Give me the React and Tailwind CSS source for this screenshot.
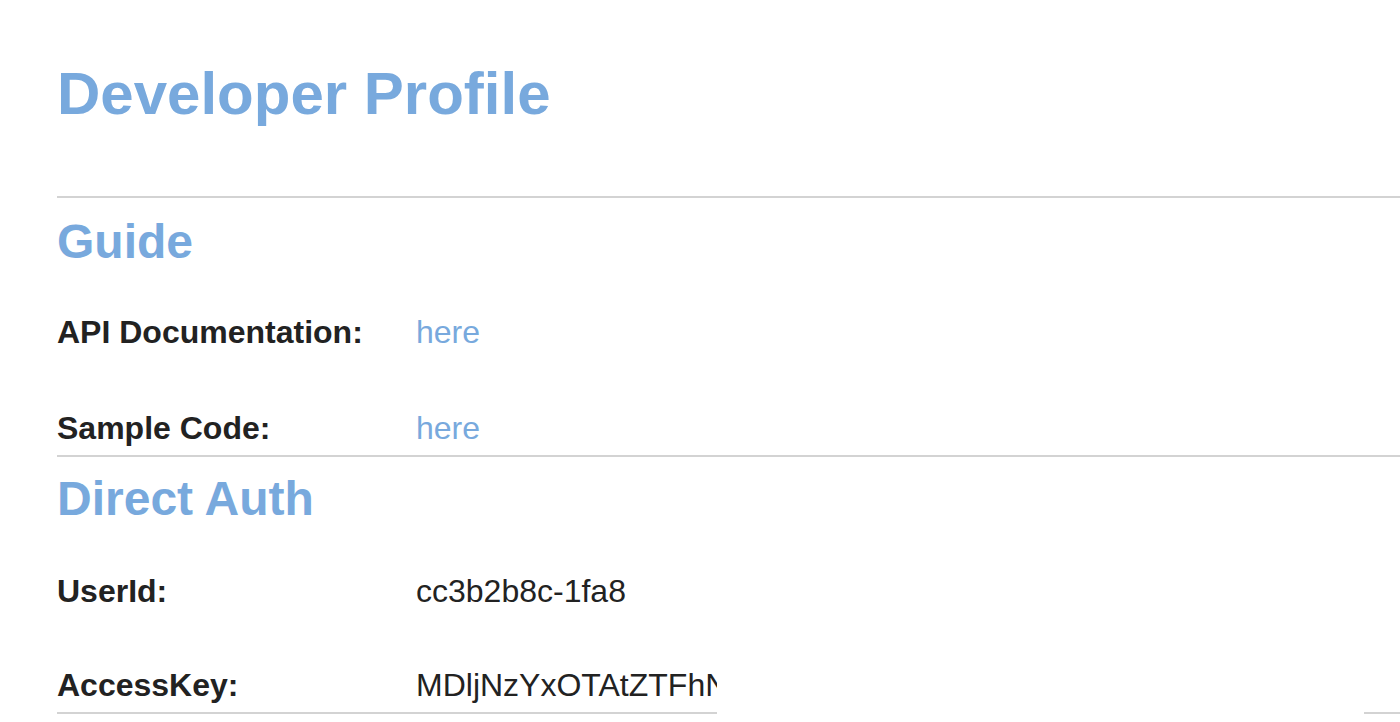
export default function App() {
  const font = { fontFamily: '"Liberation Sans", Arial, Helvetica, sans-serif' };

  return (
    <div className="min-h-screen bg-white pl-[57px] text-[#222222]" style={font}>
      <h1 className="mt-[64px] mb-[72px] text-[60px] leading-[60px] font-bold text-[#78a9dd]">Developer Profile</h1>

      <section className="border-t-2 border-[#d3d3d3]">
        <h2 className="mt-[20px] text-[48px] leading-[48px] font-bold text-[#78a9dd]">Guide</h2>
        <div className="mt-[50px] flex text-[32px] leading-[32px]">
          <span className="w-[359px] font-bold">API Documentation:</span>
          <a href="#" className="text-[#78a9dd]">here</a>
        </div>
        <div className="mt-[64px] mb-[11px] flex text-[32px] leading-[32px]">
          <span className="w-[359px] font-bold">Sample Code:</span>
          <a href="#" className="text-[#78a9dd]">here</a>
        </div>
      </section>

      <section className="border-t-2 border-[#d3d3d3]">
        <h2 className="mt-[18px] text-[48px] leading-[48px] font-bold text-[#78a9dd]">Direct Auth</h2>
        <div className="mt-[52px] flex text-[32px] leading-[32px]">
          <span className="w-[359px] font-bold">UserId:</span>
          <span>cc3b2b8c-1fa8</span>
        </div>
        <div className="mt-[62px] flex items-end text-[32px] leading-[32px]">
          <span className="w-[359px] shrink-0 border-b-2 border-[#d3d3d3] pb-[11px] font-bold">AccessKey:</span>
          <span className="w-[301px] shrink-0 overflow-hidden whitespace-nowrap border-b-2 border-[#d3d3d3] pb-[11px]">
            MDljNzYxOTAtZTFhNi00ZjM2LWE4YjMtYmU4ZDc2OTk5MDFk
          </span>
          <span className="flex-1" />
          <span className="w-[36px] shrink-0 border-b-2 border-[#d3d3d3]" />
        </div>
      </section>
    </div>
  );
}
